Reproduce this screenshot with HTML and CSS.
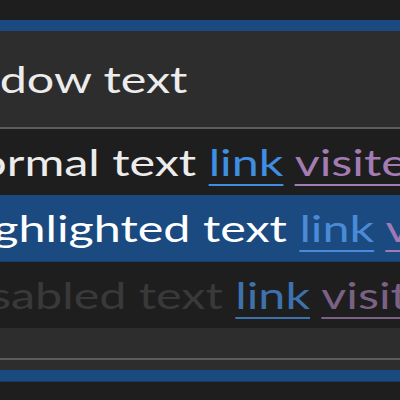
FILE: index.html
```html
<!DOCTYPE html>
<html lang="en">
<head>
  <meta charset="UTF-8" />
  <title>Palette preview</title>
  <link rel="stylesheet" href="styles.css">
</head>
<body>
  <div class="top-bar"></div>
  <div class="accent"></div>
  <div class="window">
    <span class="line window-text">Window text</span>
  </div>
  <div class="view">
    <div class="row normal"><span class="line">Normal text <a class="link">link</a> <a class="visited">visited</a></span></div>
    <div class="row highlight"><span class="line">Highlighted text <a class="link">link</a> <a class="visited">visited</a></span></div>
    <div class="row disabled"><span class="line">Disabled text <a class="link">link</a> <a class="visited">visited</a></span></div>
  </div>
  <div class="footer">
    <div class="footer-line"></div>
  </div>
  <div class="accent bottom"></div>
  <div class="bottom-bar"></div>
</body>
</html>
```
FILE: styles.css
```css
body {
  margin: 0;
  font-family: Lato, 'Open Sans', sans-serif;
  background: #1e1e1e;
  color: #ececec;
  overflow: hidden;
}
.top-bar {
  height: 20px;
  background: #1e1e1e;
}
.accent {
  height: 11px;
  background: #1a4a80;
}
.accent.bottom {
  height: 11px;
  border-bottom: 1px solid #173a60;
}
.window {
  background: #2d2d2d;
  height: 98px;
  padding-top: 15px;
  box-sizing: border-box;
  border-bottom: 2px solid #5c5c5c;
  font-size: 37px;
  line-height: 66px;
  white-space: nowrap;
  overflow: hidden;
}
.line {
  display: inline-block;
  transform: scaleX(1.31);
  transform-origin: 0 0;
}
.window-text {
  margin-left: -89px;
}
.view {
  background: #1e1e1e;
}
.row {
  font-size: 37px;
  line-height: 66px;
  height: 66px;
  white-space: nowrap;
  overflow: hidden;
}
.row a {
  text-decoration: underline;
  text-underline-offset: 8px;
  text-decoration-thickness: 2px;
}
.link {
  color: #3f8ee2;
}
.visited {
  color: #a47cb4;
}
.normal .line {
  margin-left: -57px;
}
.highlight {
  background: #1a4a80;
  color: #ffffff;
  height: 67px;
  border-bottom: 1px solid #163f6a;
  box-sizing: border-box;
}
.highlight .line {
  margin-left: -55px;
}
.highlight .link {
  color: #4a8ad6;
}
.highlight .visited {
  color: #a07ab0;
}
.disabled {
  color: #393939;
}
.disabled .line {
  margin-left: -58px;
}
.disabled .link {
  color: #3d72ae;
}
.disabled .visited {
  color: #7c6186;
}
.footer {
  background: #2d2d2d;
  height: 42px;
  padding-top: 30px;
  box-sizing: border-box;
}
.footer-line {
  height: 2px;
  background: #5c5c5c;
}
.bottom-bar {
  height: 30px;
}
```
